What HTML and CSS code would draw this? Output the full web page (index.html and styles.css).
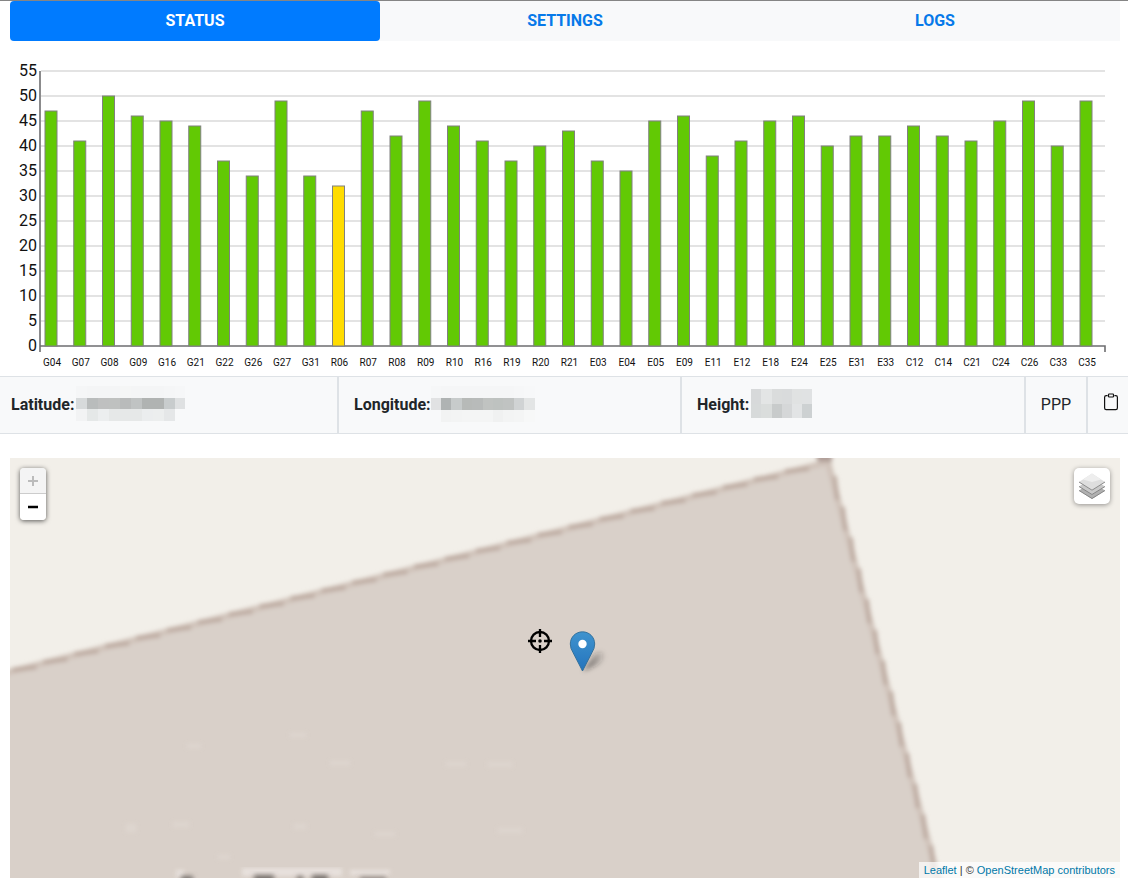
FILE: index.html
```html
<!DOCTYPE html>
<html lang="en">
<head>
<meta charset="utf-8">
<title>Status</title>
<link rel="stylesheet" href="styles.css">
</head>
<body>
<nav class="tabs">
  <a class="tab active">STATUS</a>
  <a class="tab">SETTINGS</a>
  <a class="tab">LOGS</a>
</nav>
<svg class="chart" id="chart" width="1128" height="335" viewBox="0 41 1128 335"></svg>
<section class="position">
  <div class="cell"><b>Latitude:</b><span class="mosaic lat" id="lat"></span></div>
  <div class="cell"><b>Longitude:</b><span class="mosaic lon" id="lon"></span></div>
  <div class="cell"><b>Height:</b><span class="mosaic height" id="height"></span></div>
  <div class="cell solution">PPP</div>
  <div class="cell copy">
    <svg width="16" height="18" viewBox="0 0 16 18" fill="none" stroke="#111" stroke-width="1.2"><path d="M4.6 2.6H3.2Q1.6 2.6 1.6 4.2V15Q1.6 16.6 3.2 16.6H12.8Q14.4 16.6 14.4 15V4.2Q14.4 2.6 12.8 2.6H11.4"/><rect x="5.5" y="1" width="5" height="3" rx=".7"/></svg>
  </div>
</section>
<main class="map">
  <svg class="tiles" width="1110" height="420" viewBox="10 458 1110 420">
    <defs>
      <filter id="soft" x="-5%" y="-5%" width="110%" height="110%"><feGaussianBlur stdDeviation="2.2"/></filter>
      <filter id="shade" x="-50%" y="-50%" width="200%" height="200%"><feGaussianBlur stdDeviation="2.4"/></filter>
      <linearGradient id="pin" x2="0" y2="1"><stop stop-color="#3f93ce"/><stop offset="1" stop-color="#2474bd"/></linearGradient>
      <linearGradient id="cast"><stop stop-color="#222" stop-opacity=".65"/><stop offset="1" stop-color="#222" stop-opacity=".08"/></linearGradient>
    </defs>
    <rect x="10" y="458" width="1110" height="420" fill="#f2efe9"/>
    <g filter="url(#soft)">
      <path d="M-10 677L828 462L941 890H-10Z" fill="#d9d0c9"/>
      <path d="M-10 677L828 462L941 890" fill="none" stroke="#d0c3ba" stroke-width="6"/>
      <path id="steps" fill="none" stroke="#b8a499" stroke-width="4.5" opacity=".75"/>
      <path d="M815 452H832V462H818Z" fill="#b09f98"/>
    </g>
    <g filter="url(#soft)" fill="#e2dad4" opacity=".55">
      <rect x="330" y="761" width="20" height="4"/><rect x="446" y="762" width="20" height="4"/><rect x="488" y="762" width="24" height="5"/>
      <rect x="290" y="733" width="16" height="4"/><rect x="187" y="744" width="14" height="4"/><rect x="173" y="822" width="16" height="5"/>
      <rect x="126" y="824" width="10" height="8"/><rect x="294" y="824" width="12" height="5"/><rect x="498" y="828" width="24" height="5"/>
      <rect x="375" y="832" width="20" height="4"/><rect x="218" y="855" width="12" height="4"/>
    </g>
    <g filter="url(#soft)" fill="#ece6e2" opacity=".8">
      <rect x="176" y="870" width="8" height="8"/><rect x="242" y="868" width="100" height="8"/><rect x="350" y="870" width="40" height="5"/>
    </g>
    <g filter="url(#shade)" fill="#756e6a">
      <rect x="181" y="876" width="12" height="7"/><rect x="254" y="875" width="20" height="8"/><rect x="297" y="876" width="6" height="7"/><rect x="312" y="875" width="16" height="8"/><rect x="360" y="877" width="26" height="6" opacity=".8"/>
    </g>
    <g fill="none" stroke="#000" stroke-width="2.3">
      <circle cx="540" cy="641" r="9"/>
      <path d="M540 629V637M540 645V653M528 641H536M544 641H552"/>
    </g>
    <circle cx="540" cy="641" r="1.8"/>
    <path d="M583 671L594 655Q602 649 604 655Q605 660 597 665Z" fill="url(#cast)" filter="url(#shade)"/>
    <path d="M582.5 671L573 652.5Q570.3 648.5 570.3 644C570.3 637 575.8 631.8 582.5 631.8S594.7 637 594.7 644Q594.7 648.5 592 652.5Z" fill="url(#pin)" stroke="#2e6c97" stroke-width=".9"/>
    <circle cx="582.5" cy="644" r="4.2" fill="#fff"/>
  </svg>
  <div class="zoom">
    <span class="disabled"><svg width="12" height="12"><path d="M1 6H11M6 1V11" stroke="#bbb" stroke-width="2"/></svg></span>
    <span><svg width="12" height="12"><path d="M1 6H11" stroke="#000" stroke-width="2.4"/></svg></span>
  </div>
  <div class="layers">
    <svg width="26" height="26" viewBox="0 0 26 26">
      <path d="M0 17.5L13 9L26 17.5L13 26Z" fill="#b0b0b0"/><path d="M0 17.5L13 25.5L26 17.5" fill="none" stroke="#858585"/>
      <path d="M0 13.5L13 5L26 13.5L13 22Z" fill="#c9c9c9"/><path d="M0 13.5L13 21.5L26 13.5" fill="none" stroke="#858585"/>
      <path d="M0 9L13 .5L26 9L13 17.5Z" fill="#dedede"/><path d="M0 9L13 17.2L26 9" fill="none" stroke="#8b8b8b"/><path d="M4 6.5L13 .5L22 6.5L13 9Z" fill="#eee"/>
    </svg>
  </div>
  <div class="attribution"><a>Leaflet</a> | © <a>OpenStreetMap contributors</a></div>
</main>
<script src="chart.js"></script>
</body>
</html>
```
FILE: styles.css
```css
* { box-sizing: border-box; }
body { margin: 0; height: 878px; overflow: hidden; background: #fff; color: #212529; font: 16px/24px Roboto, sans-serif; }
.tabs { display: flex; height: 41px; margin: 0; padding: 0 8px 0 10px; border-top: 1px solid #858585; background: linear-gradient(#f8f9fa, #f8f9fa) content-box; }
.tab { flex: 1; padding: 8px 0; text-align: center; font-weight: 700; color: #0779e9; border-radius: 4px; }
.tab.active { background: #007bff; color: #fff; }
.chart { display: block; }
.grid { stroke: #e3e3e3; stroke-width: 2; }
.axis { fill: none; stroke: #6e6e70; stroke-width: 1.6; }
.bar { fill: #62c904; stroke: #808080; stroke-width: 1; }
.bar.weak { fill: #ffdc00; }
.value { font-size: 16px; text-anchor: end; fill: #111; }
.name { font-size: 10px; text-anchor: middle; fill: #111; }
.position { display: grid; grid-template-columns: 339px 343px 344px 62px 40px; height: 58px; background: #f8f9fa; border-top: 1px solid #dee2e6; border-bottom: 1px solid #dee2e6; }
.cell { display: flex; align-items: center; padding-left: 15px; border-right: 2px solid #dee2e6; }
.cell:first-child { padding-left: 11px; }
.cell.solution { padding: 0; justify-content: center; }
.cell.copy { border: 0; padding: 0 0 6px 15px; }
.mosaic { display: grid; flex: none; }
.lat { width: 109px; height: 35px; margin-left: 2px; margin-bottom: 3px; grid-template: repeat(3, 1fr) / repeat(10, 1fr); }
.lon { width: 104px; height: 36px; margin-top: -3px; grid-template: repeat(3, 1fr) / repeat(10, 1fr); }
.height { width: 61px; height: 29px; margin-left: 2px; margin-top: -4px; grid-template: 15px 14px / repeat(6, 1fr); }
.map { position: relative; margin: 24px 8px 0 10px; height: 420px; background: #f2efe9; }
.tiles { display: block; }
.zoom { position: absolute; left: 10px; top: 10px; width: 26px; border-radius: 4px; overflow: hidden; box-shadow: 0 1px 5px rgba(0,0,0,.65); }
.zoom span { display: flex; height: 26px; align-items: center; justify-content: center; background: #fff; }
.zoom .disabled { background: #f4f4f4; border-bottom: 1px solid #ccc; }
.layers { position: absolute; right: 10px; top: 10px; width: 36px; height: 36px; padding: 5px; border-radius: 5px; background: #fff; box-shadow: 0 1px 5px rgba(0,0,0,.4); }
.layers svg { display: block; }
.attribution { position: absolute; right: 0; bottom: 0; height: 16px; padding: 0 5px; background: rgba(255,255,255,.7); color: #333; font: 11px/16px "Liberation Sans", Arial, sans-serif; white-space: nowrap; }
.attribution a { color: #0078a8; }
```
FILE: chart.js
```js
const names = 'G04 G07 G08 G09 G16 G21 G22 G26 G27 G31 R06 R07 R08 R09 R10 R16 R19 R20 R21 E03 E04 E05 E09 E11 E12 E18 E24 E25 E31 E33 C12 C14 C21 C24 C26 C33 C35'.split(' ');
const levels = [47,41,50,46,45,44,37,34,49,34,32,47,42,49,44,41,37,40,43,37,35,45,46,38,41,45,46,40,42,42,44,42,41,45,49,40,49];
let out = '';
for (let v = 0; v <= 55; v += 5) {
  const y = 346 - v * 5;
  if (v) out += `<line class="grid" x1="41" x2="1105" y1="${y}" y2="${y}"/>`;
  out += `<text class="value" x="37" y="${y + 5}">${v}</text>`;
}
out += '<path class="axis" d="M40 71V352M40 346H1105V352"/>';
names.forEach((name, i) => {
  const x = 51 + i * 28.75;
  out += `<rect class="bar${levels[i] < 33 ? ' weak' : ''}" x="${x - 6}" y="${346 - levels[i] * 5}" width="12" height="${levels[i] * 5}"/>`;
  out += `<text class="name" x="${x + 1}" y="366">${name}</text>`;
});
document.getElementById('chart').innerHTML = out;

// Stepped edges of the enlarged map tile
let d = '';
for (let x = 797; x > -20; x -= 30.9) {
  const y = 470 + (797 - x) * 0.257;
  d += `M${x - 12} ${y + 1.3}L${x + 12} ${y - 1.3}`;
}
for (let y = 488; y < 890; y += 30.8) {
  const x = 836 + (y - 488) * 0.261;
  d += `M${x - 1.3} ${y - 12}L${x + 1.3} ${y + 12}`;
}
document.getElementById('steps').setAttribute('d', d);

const fill = (id, colours) => {
  document.getElementById(id).innerHTML = colours.split(' ').map(c => `<i style="background:#${c}"></i>`).join('');
};
fill('lat', 'f5f6f7 f4f5f6 f4f5f6 f4f5f6 f5f6f6 f4f5f6 f4f5f6 f4f5f6 f5f6f7 f6f7f8 d7dadb b9bcbc bfc0c0 bfc1c0 b9bbbb c0c3c3 b0b3b2 b0b3b2 c8cccd dfe1e2 f2f3f4 e5e8e8 eceeef e6e8e8 e6e8e8 e6e8e8 ebedee eceeee e5e7e8 f8f9fa');
fill('lon', 'f6f7f8 f5f6f7 f5f6f7 f5f6f7 f5f6f7 f5f6f7 f5f6f7 f5f6f7 f6f7f8 f7f8f9 e1e2e3 afb3b3 c7cbcb b7bab8 b8bbba c0c3c1 bec2c0 c0c3c2 d0d3d4 e3e5e5 f8f9fa f2f3f3 f3f4f4 f4f5f5 f4f5f5 f4f5f5 f0f1f1 f3f4f4 f4f5f5 f7f8f8');
fill('height', 'd7d9da e3e5e5 dadcdc d9dbdc e0e2e2 e0e2e3 d7dada dadddc c8cbcb d5d7d8 e2e4e5 cdd1d2');
```
